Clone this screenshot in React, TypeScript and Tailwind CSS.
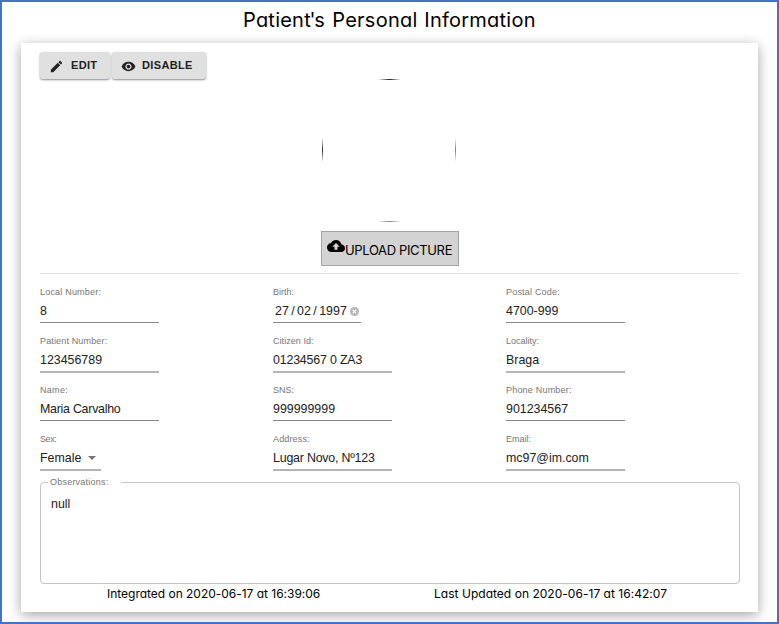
import React from "react";

const round = "font-['Inter',sans-serif] [font-feature-settings:'cv11']";

type FieldProps = {
  label: string;
  value: string;
  labelClass?: string;
  valueClass?: string;
  width?: string;
  soft?: boolean;
  children?: React.ReactNode;
};

function Field({ label, value, labelClass = "", valueClass = "", width = "w-[119px]", soft = false, children }: FieldProps) {
  return (
    <div className={`h-[49px] whitespace-nowrap ${width}`}>
      <div className={`h-[12px] text-[9px] leading-[12px] text-[#757575] ${labelClass}`}>{label}</div>
      <div
        className={`flex items-center text-[12.4px] text-[#212121] ${
          soft ? "h-[26px] border-b-2 border-[#b4b4b4] pt-[2px]" : "h-[25px] border-b border-[#878787] pt-[2px]"
        }`}
      >
        <span className={valueClass}>{value}</span>
        {children}
      </div>
    </div>
  );
}

export default function App() {
  return (
    <div className="flex h-[624px] w-[779px] flex-col overflow-hidden border-2 border-[#4472c4] bg-white font-['Liberation_Sans',Arial,sans-serif]">
      <h1 className={`h-[41px] whitespace-nowrap pl-[241px] pt-[3px] text-[20px] leading-[30px] tracking-[0.23px] text-black ${round}`}>
        Patient<span className="-mx-[1.5px]">'</span>s <span className="ml-[1.5px]">Personal</span> <span className="ml-[1px]">Information</span>
      </h1>
      <main className="ml-[19px] flex h-[569px] w-[737px] flex-col bg-white px-[19px] pt-[9px] shadow-[0_3px_12px_rgba(0,0,0,0.36)]">
        <div className="flex h-[28px] gap-[2px]">
          <button className="flex h-[27px] w-[70px] items-center rounded-[3px] bg-[#e0e0e0] pl-[9px] text-[11px] font-bold tracking-[0.3px] text-[#212121] shadow-[0_1px_2px_rgba(0,0,0,0.45)]">
            <svg viewBox="0 0 24 24" className="mr-[7px] mt-px size-[15px] fill-current">
              <path d="M3 17.25V21h3.75L17.81 9.94l-3.75-3.75L3 17.25zM20.71 7.04c.39-.39.39-1.02 0-1.41l-2.34-2.34c-.39-.39-1.02-.39-1.41 0l-1.83 1.83 3.75 3.75 1.83-1.83z" />
            </svg>
            <span>EDIT</span>
          </button>
          <button className="flex h-[27px] w-[94px] items-center rounded-[3px] bg-[#e0e0e0] pl-[9px] text-[11px] font-bold tracking-[0.35px] text-[#212121] shadow-[0_1px_2px_rgba(0,0,0,0.45)]">
            <svg viewBox="0 0 24 24" className="mr-[6px] mt-px size-[15px] fill-current">
              <path d="M12 4.500C7 4.500 2.730 7.610 1 12c1.730 4.390 6 7.500 11 7.500s9.270-3.110 11-7.500c-1.730-4.390-6-7.500-11-7.500zM12 17c-2.760 0-5-2.240-5-5s2.240-5 5-5 5 2.240 5 5-2.240 5-5 5zm0-8c-1.660 0-3 1.340-3 3s1.340 3 3 3 3-1.340 3-3-1.340-3-3-3z" />
            </svg>
            <span>DISABLE</span>
          </button>
        </div>
        <svg viewBox="0 0 136 144" className="ml-[281px] mt-[-2px] h-[144px] w-[136px]">
          <defs>
            <linearGradient id="h">
              <stop offset="0" stopColor="#222" stopOpacity="0" />
              <stop offset=".5" stopColor="#222" />
              <stop offset="1" stopColor="#222" stopOpacity="0" />
            </linearGradient>
            <linearGradient id="v" x2="0" y2="1">
              <stop offset="0" stopColor="#222" stopOpacity="0" />
              <stop offset=".5" stopColor="#222" />
              <stop offset="1" stopColor="#222" stopOpacity="0" />
            </linearGradient>
          </defs>
          <rect x="57" y="1" width="23" height="1" fill="url(#h)" />
          <rect x="57" y="143" width="23" height="1" fill="url(#h)" opacity=".55" />
          <rect x="1" y="60" width="1" height="24" fill="url(#v)" />
          <rect x="134" y="60" width="1" height="24" fill="url(#v)" opacity=".6" />
        </svg>
        <button className="ml-[281px] mt-[9px] flex h-[35px] w-[138px] shrink-0 border border-[#a3a3a3] bg-[#d3d3d3] pl-[5px] text-black">
          <svg viewBox="0 0 24 24" className="mt-[5px] size-[18px] shrink-0 fill-current">
            <path d="M19.350 10.040C18.670 6.590 15.640 4 12 4 9.110 4 6.600 5.640 5.350 8.040 2.340 8.360 0 10.910 0 14c0 3.310 2.690 6 6 6h13c2.760 0 5-2.240 5-5 0-2.640-2.050-4.780-4.650-4.960zM14 13v4h-4v-4H7l5-5 5 5h-3z" />
          </svg>
          <span className={`mt-[9px] whitespace-nowrap text-[13px] leading-[18px] tracking-[-0.35px] ${round}`}>UPLOAD PICTURE</span>
        </button>
        <div className="mt-[7px] h-px w-[699px] shrink-0 bg-[#dedede]" />
        <div className="mt-[12px] grid shrink-0 grid-cols-[233px_233px_233px] grid-rows-[49px_49px_49px_49px]">
          <Field label="Local Number:" value="8" labelClass="tracking-[0.2px]" />
          <Field label="Birth:" value="27 / 02 / 1997" valueClass="pl-[2px] [word-spacing:-1px]" width="w-[88px]">
            <svg viewBox="0 0 10 10" className="ml-[3px] size-[9px]">
              <circle cx="5" cy="5" r="5" fill="#b5b5b5" />
              <path d="M3 3l4 4M7 3l-4 4" stroke="white" strokeWidth="1.3" />
            </svg>
          </Field>
          <Field label="Postal Code:" value="4700-999" labelClass="tracking-[0.2px]" />
          <Field label="Patient Number:" value="123456789" soft labelClass="tracking-[0.15px]" />
          <Field label="Citizen Id:" value="01234567 0 ZA3" soft labelClass="tracking-[0.05px]" valueClass="tracking-[-0.18px]" />
          <Field label="Locality:" value="Braga" soft />
          <Field label="Name:" value="Maria Carvalho" labelClass="tracking-[0.3px]" valueClass="tracking-[-0.25px]" />
          <Field label="SNS:" value="999999999" />
          <Field label="Phone Number:" value="901234567" labelClass="tracking-[0.2px]" />
          <Field label="Sex:" value="Female" soft width="w-[61px]" labelClass="tracking-[-0.4px]">
            <svg viewBox="0 0 8 4" className="ml-[7px] h-[4px] w-[8px] fill-[#757575]">
              <path d="M0 0h8L4 4z" />
            </svg>
          </Field>
          <Field label="Address:" value="Lugar Novo, Nº123" soft labelClass="tracking-[0.15px]" valueClass="tracking-[-0.2px]" />
          <Field label="Email:" value="mc97@im.com" soft />
        </div>
        <fieldset className="-mt-[7px] h-[109px] w-[700px] shrink-0 rounded-[4px] border border-[#c4c4c4] pl-[10px]">
          <legend className="ml-[-3px] h-[14px] w-[73px] whitespace-nowrap pl-[2px] text-[9px] leading-[14px] tracking-[0.22px] text-[#757575]">
            Observations:
          </legend>
          <div className="mt-[7px] text-[12.4px] leading-[16px] text-[#212121]">null</div>
        </fieldset>
        <footer className={`flex h-[20px] shrink-0 whitespace-nowrap text-[12px] leading-[20px] text-black ${round}`}>
          <span className="w-[327px] pl-[67px] tracking-[-0.02px]">Integrated on 2020-06-17 at 16:39:06</span>
          <span className="pl-[67px] tracking-[0.03px]">Last Updated on 2020-06-17 at 16:42:07</span>
        </footer>
      </main>
    </div>
  );
}
